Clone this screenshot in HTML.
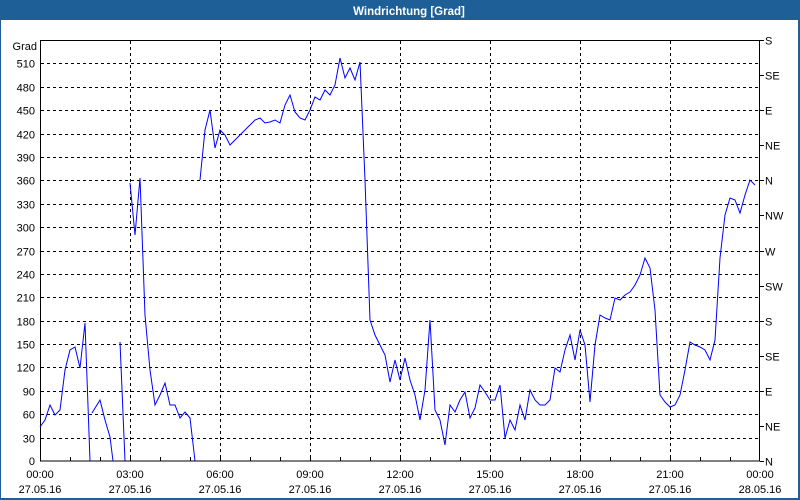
<!DOCTYPE html>
<html><head><meta charset="utf-8"><style>
html,body{margin:0;padding:0;background:#fff;}
svg{display:block;font-family:"Liberation Sans",sans-serif;}
</style></head><body>
<svg width="800" height="500" viewBox="0 0 800 500" xmlns="http://www.w3.org/2000/svg">
<rect x="0" y="0" width="800" height="500" fill="#1d5f96"/>
<rect x="1" y="20" width="797" height="478" fill="#fff"/>
<text x="409" y="15" fill="#fff" font-size="11.5" font-weight="bold" text-anchor="middle">Windrichtung [Grad]</text>
<g id="grid" stroke="#000" stroke-width="1" stroke-dasharray="3,3" shape-rendering="crispEdges"></g>
<rect x="40.5" y="40.5" width="719" height="420.5" fill="none" stroke="#000" shape-rendering="crispEdges"/>
<g id="ticks" stroke="#000" shape-rendering="crispEdges"></g>
<g id="labels" font-size="11" fill="#000"></g>
<polyline id="data" fill="none" stroke="#0000ff" stroke-width="1"/>
</svg>
<script>
var ns="http://www.w3.org/2000/svg";
function el(p,t,a,txt){var e=document.createElementNS(ns,t);for(var k in a)e.setAttribute(k,a[k]);if(txt)e.textContent=txt;document.getElementById(p).appendChild(e);}
var y0=461,y1=40;function Y(v){return y0-(v/540)*(y0-y1);}
for(var v=30;v<=510;v+=30){var y=Math.round(Y(v))+0.5;el("grid","line",{x1:41,y1:y,x2:759,y2:y});el("labels","text",{x:35,y:y+4,"text-anchor":"end"},String(v));}
el("labels","text",{x:35,y:465,"text-anchor":"end"},"0");
el("labels","text",{x:37,y:50,"text-anchor":"end"},"Grad");
var times=["00:00","03:00","06:00","09:00","12:00","15:00","18:00","21:00","00:00"];
for(var i=0;i<=8;i++){var x=40+i*90;if(i>0&&i<8)el("grid","line",{x1:x+0.5,y1:41,x2:x+0.5,y2:460});
el("labels","text",{x:x,y:478,"text-anchor":"middle"},times[i]);
el("labels","text",{x:x,y:493,"text-anchor":"middle"},i==8?"28.05.16":"27.05.16");}
for(var h=1;h<24;h++){var x=40+h*30+0.5;el("ticks","line",{x1:x,y1:461,x2:x,y2:457});}
var dirs=["N","NE","E","SE","S","SW","W","NW","N","NE","E","SE","S"];
for(var i=0;i<=12;i++){var y=Math.round(Y(i*45))+0.5;el("ticks","line",{x1:760,y1:y,x2:764,y2:y});el("labels","text",{x:765,y:y+4},dirs[i]);}
var pts=[[40,427],[45,420],[50,405],[55,415],[60,410],[65,370],[70,350],[75,347],[80,368],[85,323],[90,461],null,[92,413],[100,400],[105,420],[110,437],[113,461],null,[120,342],[125,461],null,[130,183],[135,235],[140,178],[145,315],[150,370],[155,405],[160,395],[165,383],[170,405],[175,405],[180,418],[185,412],[190,418],[195,461],null,[200,180],[205,130],[210,110],[215,148],[220,130],[225,135],[230,145],[235,140],[240,135],[245,130],[250,125],[255,120],[260,118],[265,123],[270,122],[275,120],[280,123],[285,105],[290,95],[295,112],[300,118],[305,120],[310,110],[315,97],[320,100],[325,90],[330,95],[335,85],[340,58],[345,78],[350,68],[355,80],[360,62],[365,180],[370,320],[375,335],[380,345],[385,355],[390,382],[395,360],[400,380],[405,358],[410,380],[415,395],[420,420],[425,390],[430,320],[435,410],[440,420],[445,445],[450,405],[455,412],[460,400],[465,392],[470,418],[475,408],[480,385],[485,392],[490,400],[495,400],[500,385],[505,438],[510,420],[515,430],[520,405],[525,420],[530,390],[535,400],[540,405],[545,405],[550,400],[555,368],[560,372],[565,350],[570,335],[575,360],[580,330],[585,345],[590,402],[595,345],[600,315],[605,318],[610,320],[615,298],[620,300],[625,295],[630,292],[635,285],[640,275],[645,258],[650,268],[655,310],[660,395],[665,402],[670,407],[675,405],[680,395],[685,370],[690,342],[695,345],[700,347],[705,350],[710,360],[715,340],[720,258],[725,215],[730,198],[735,200],[740,213],[745,195],[750,180],[755,185]];
var seg=[],svg=document.querySelector("svg");
function flush(){if(seg.length){var p=document.createElementNS(ns,"polyline");p.setAttribute("fill","none");p.setAttribute("stroke","#0000ff");p.setAttribute("points",seg.join(" "));svg.appendChild(p);}seg=[];}
pts.forEach(function(q){if(q)seg.push(q[0]+","+q[1]);else flush();});flush();
</script>
</body></html>
